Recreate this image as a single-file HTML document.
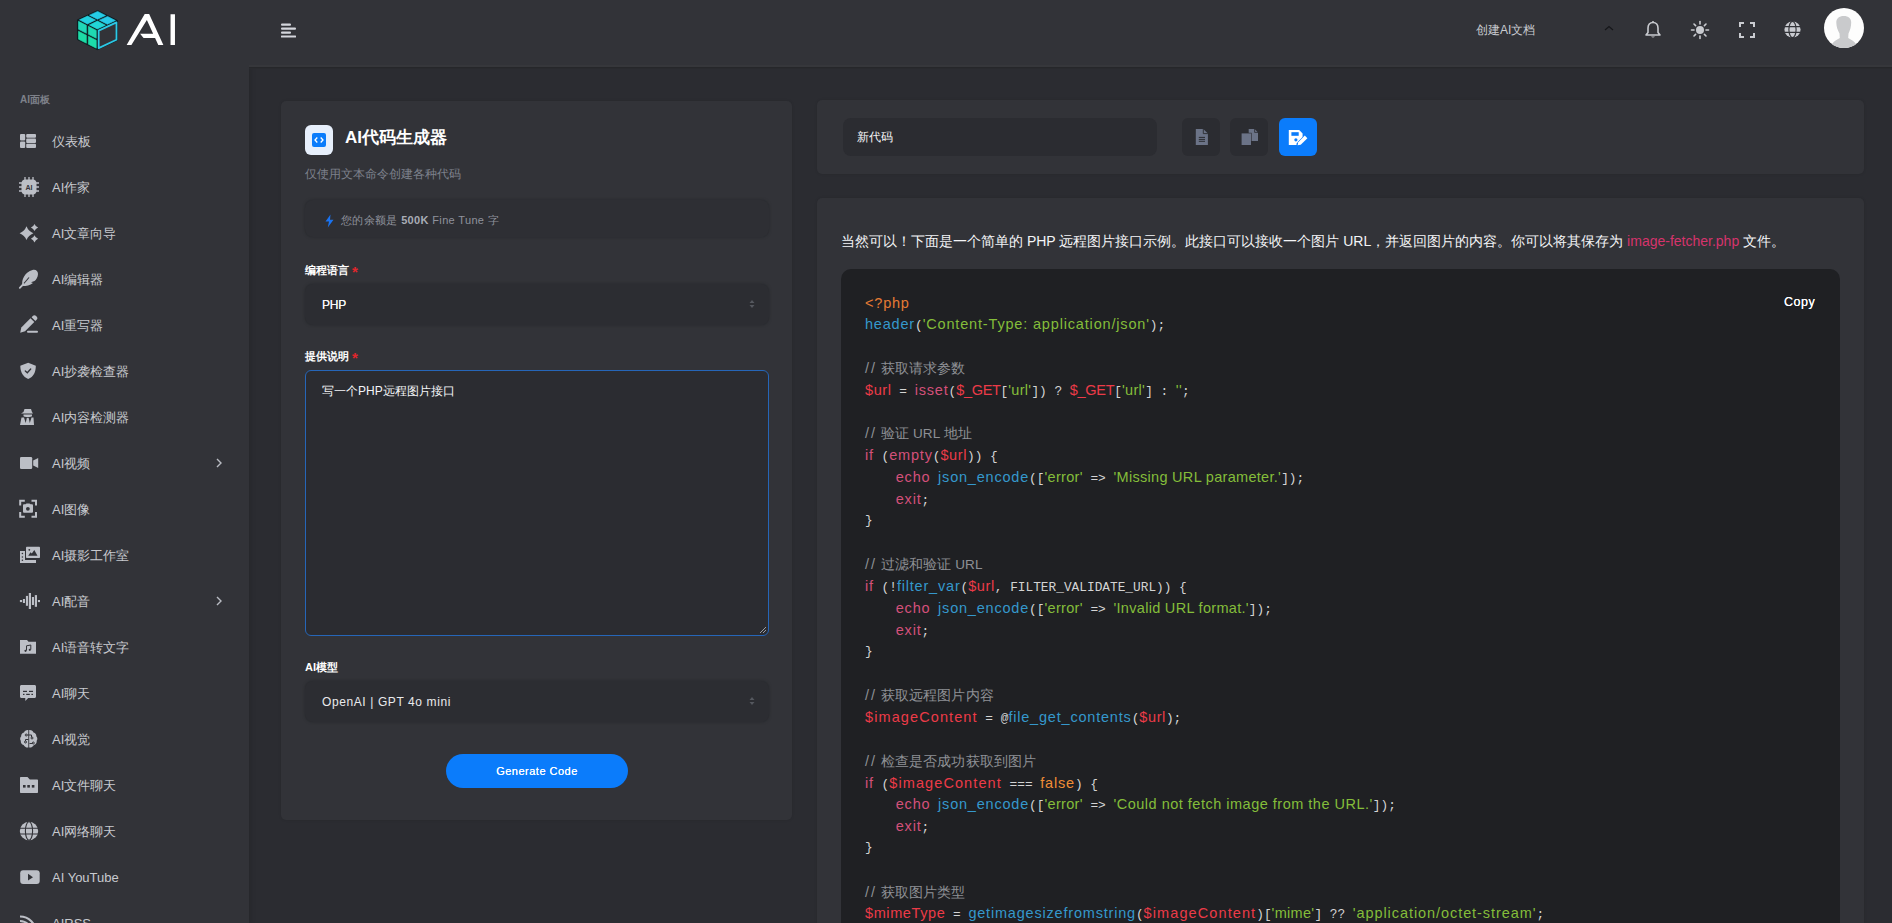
<!DOCTYPE html>
<html><head><meta charset="utf-8">
<style>
*{box-sizing:border-box;margin:0;padding:0}
html,body{width:1892px;height:923px;overflow:hidden;background:#2b2c31;font-family:"Liberation Sans",sans-serif;color:#e6e7ea}
.abs{position:absolute}
#header{position:absolute;left:0;top:0;width:1892px;height:67px;background:#323338;z-index:2}
#sidebar{position:absolute;left:0;top:67px;width:249px;height:856px;background:#323338;box-shadow:2px 0 5px rgba(0,0,0,.12)}
.sbt{position:absolute;left:52px;font-size:13px;line-height:16px;color:#c8cacf;white-space:nowrap}
.card{position:absolute;background:#323338;border-radius:5px;box-shadow:0 0 3px rgba(0,0,0,.12)}
.lbl{position:absolute;left:24px;font-size:11px;font-weight:bold;color:#fff;line-height:14px}
.lbl b{color:#e2262c;font-weight:bold;margin-left:3px;font-size:15px;position:relative;top:3px;line-height:10px}
.inp{position:absolute;left:24px;width:464px;background:#2c2d32;border-radius:8px;box-shadow:0 0 3px rgba(30,31,35,.6)}
.inp .v{position:absolute;left:17px;font-size:12px;color:#e9eaec;line-height:14px;white-space:nowrap}
.arr{position:absolute;right:14px;width:6px;height:10px}
.ibtn{position:absolute;top:18px;width:38px;height:38px;border-radius:6px;background:#2b2c31}
.ln{position:absolute;left:24px;height:22px;font-family:"Liberation Mono",monospace;font-size:12.8px;line-height:22px;color:#d4d4d4;white-space:pre}
.ln span{font-family:"Liberation Sans",sans-serif;font-size:14.5px;letter-spacing:.8px}
.ln span.c{font-size:13.5px;letter-spacing:.1px;color:#8e9095}.ln span.s{letter-spacing:.3px}.ln span.v{letter-spacing:.6px}.ln span.g{letter-spacing:-.3px}.ln span.sl{letter-spacing:2px;font-size:14.5px;color:#8e9095}
.m{color:#e57a34}.f{color:#3598cc}.s{color:#84bd3a}.c{color:#909297}.v{color:#ec3b48}.k{color:#d4507a}.l{color:#f08d36}
</style></head>
<body>
<div id="header">
  <svg class="abs" style="left:70px;top:5px" width="120" height="50" viewBox="0 0 1892 788">
<path d="M118 234 L436 86 L748 244 L748 556 L430 704 L118 546 Z" fill="#0e1d22" stroke="#0e1d22" stroke-width="14" stroke-linejoin="round"/>
<path d="M430 377 L306 314 L433 254 L558 318 Z" fill="#22d5d6" stroke="#22d5d6" stroke-width="10" stroke-linejoin="round"/>
<path d="M589 303 L464 239 L592 180 L716 244 Z" fill="#27cbe9" stroke="#27cbe9" stroke-width="10" stroke-linejoin="round"/>
<path d="M274 298 L150 234 L277 175 L402 238 Z" fill="#23d1e0" stroke="#23d1e0" stroke-width="10" stroke-linejoin="round"/>
<path d="M433 224 L308 160 L436 101 L560 165 Z" fill="#25cde6" stroke="#25cde6" stroke-width="10" stroke-linejoin="round"/>
<path d="M414 400 L290 336 L290 461 L414 524 Z" fill="#1fd9b2" stroke="#1fd9b2" stroke-width="10" stroke-linejoin="round"/>
<path d="M414 556 L290 492 L290 617 L414 680 Z" fill="#1cdcaa" stroke="#1cdcaa" stroke-width="10" stroke-linejoin="round"/>
<path d="M258 321 L134 258 L134 382 L258 446 Z" fill="#20d8b8" stroke="#20d8b8" stroke-width="10" stroke-linejoin="round"/>
<path d="M258 477 L134 414 L134 538 L258 602 Z" fill="#1ddca6" stroke="#1ddca6" stroke-width="10" stroke-linejoin="round"/>
<path d="M452 403 L733 273 L733 548 L452 679 Z" fill="#323338" stroke="#2bc9e6" stroke-width="28" stroke-linejoin="round"/>
    <path d="M893 630 L1178 143 L1248 143 L1472 630 L1392 630 L1212 238 L968 630 Z M1105 455 L1318 455 L1350 522 L1160 522 Z M1585 147 L1655 147 L1655 630 L1585 630 Z" fill="#fff"/>
  </svg>
  <svg class="abs" style="left:280px;top:22px" width="18" height="16" viewBox="0 0 18 16">
    <rect x="1" y="1.5" width="10" height="2.2" rx="1" fill="#d4d6dc"/>
    <rect x="1" y="5.5" width="15" height="2.2" rx="1" fill="#d4d6dc"/>
    <rect x="1" y="9.5" width="10" height="2.2" rx="1" fill="#d4d6dc"/>
    <rect x="1" y="13.5" width="15" height="2" rx=".5" fill="#d4d6dc"/>
  </svg>
  <div class="abs" style="left:1476px;top:22px;font-size:12px;line-height:16px;color:#c9cbd0">创建AI文档</div>
  <svg class="abs" style="left:1603px;top:24px" width="12" height="8" viewBox="0 0 12 8"><path d="M2 6 L6 2.5 L10 6" fill="none" stroke="#16171a" stroke-width="1.2"/></svg>
  <svg class="abs" style="left:1643px;top:20px" width="20" height="20" viewBox="0 0 20 20"><path d="M10 2.5 C6.8 2.5 5 5 5 8 L5 12.5 L3 15 L17 15 L15 12.5 L15 8 C15 5 13.2 2.5 10 2.5 Z" fill="none" stroke="#c9cbd0" stroke-width="1.6" stroke-linejoin="round"/><path d="M8 16.5 Q10 18.5 12 16.5 Z" fill="#c9cbd0"/><circle cx="10" cy="2" r="1" fill="#c9cbd0"/></svg>
  <svg class="abs" style="left:1690px;top:20px" width="20" height="20" viewBox="0 0 20 20"><circle cx="10" cy="10" r="4" fill="#c9cbd0"/><g stroke="#c9cbd0" stroke-width="1.6" stroke-linecap="round"><path d="M10 1.5V4"/><path d="M10 16v2.5"/><path d="M1.5 10H4"/><path d="M16 10h2.5"/><path d="M4 4l1.6 1.6"/><path d="M14.4 14.4L16 16"/><path d="M4 16l1.6-1.6"/><path d="M14.4 5.6L16 4"/></g></svg>
  <svg class="abs" style="left:1737px;top:20px" width="20" height="20" viewBox="0 0 20 20"><path d="M3 7V3h4M13 3h4v4M17 13v4h-4M7 17H3v-4" fill="none" stroke="#c9cbd0" stroke-width="2"/></svg>
  <svg class="abs" style="left:1783px;top:20px" width="19" height="19" viewBox="0 0 20 20"><circle cx="10" cy="10" r="8.5" fill="#c9cbd0"/><g stroke="#323338" stroke-width="1.2" fill="none"><ellipse cx="10" cy="10" rx="3.8" ry="8.5"/><path d="M1.5 7H18.5M1.5 13H18.5"/></g></svg>
  <div class="abs" style="left:1824px;top:8px;width:40px;height:40px;border-radius:50%;background:#fdfdfd;overflow:hidden">
    <svg width="40" height="40" viewBox="0 0 40 40"><path d="M12.3 14.5 C12.3 10.5 15 8 19.8 8 C24.5 8 27.2 10.5 27.2 14.5 C27.2 18.5 26 22.5 24.5 25.5 L24.2 30 C27 31.5 30 33 32 36 L32 42 L8 42 L8 36 C10 33 13 31.5 15.8 30 L15.5 25.5 C13.8 22.5 12.3 18.5 12.3 14.5 Z" fill="#c9cacc"/></svg>
  </div>
</div>

<div id="sidebar"></div>
<div class="abs" style="left:249px;top:65px;width:1643px;height:2px;background:#36373b;z-index:3"></div>
<div class="abs" style="left:249px;top:67px;width:1643px;height:1px;background:#26272a;z-index:3"></div>
<div class="abs" style="left:249px;top:68px;width:1643px;height:1px;background:#292a2e;z-index:3"></div>
<div class="abs" style="left:20px;top:94px;font-size:10px;line-height:12px;color:#7e818a;font-weight:bold">AI面板</div>
<svg class="abs" style="left:14px;top:126px" width="30" height="30" viewBox="0 0 30 30"><rect x="6" y="8" width="5.2" height="6.6" rx="1" fill="#bcbfc6"/><rect x="6" y="15.4" width="5.2" height="6.6" rx="1" fill="#bcbfc6"/>
<rect x="12.2" y="8" width="9.8" height="3.8" rx="1" fill="#bcbfc6"/><rect x="12.2" y="12.6" width="9.8" height="4.4" rx="1" fill="#bcbfc6"/><rect x="12.2" y="17.8" width="9.8" height="4.2" rx="1" fill="#bcbfc6"/></svg><div class="sbt" style="top:133.5px">仪表板</div>
<svg class="abs" style="left:14px;top:172px" width="30" height="30" viewBox="0 0 30 30"><rect x="7.5" y="7.5" width="15" height="15" rx="4" fill="#bcbfc6"/>
<g stroke="#bcbfc6" stroke-width="1.3"><path d="M11 5v3M15 5v3M19 5v3M11 22v3M15 22v3M19 22v3M5 11h3M5 15h3M5 19h3M22 11h3M22 15h3M22 19h3"/></g>
<text x="15" y="17.6" font-size="7" font-weight="bold" text-anchor="middle" fill="#323338" font-family="Liberation Sans">AI</text></svg><div class="sbt" style="top:179.5px">AI作家</div>
<svg class="abs" style="left:14px;top:218px" width="30" height="30" viewBox="0 0 30 30"><path d="M12.5 8.299999999999999 Q14.432 13.267999999999999 19.4 15.2 Q14.432 17.131999999999998 12.5 22.1 Q10.568 17.131999999999998 5.6 15.2 Q10.568 13.267999999999999 12.5 8.299999999999999 Z M20.5 5.9 Q21.508 8.491999999999999 24.1 9.5 Q21.508 10.508000000000001 20.5 13.1 Q19.492 10.508000000000001 16.9 9.5 Q19.492 8.491999999999999 20.5 5.9 Z M20.5 17.2 Q21.508 19.792 24.1 20.8 Q21.508 21.808 20.5 24.400000000000002 Q19.492 21.808 16.9 20.8 Q19.492 19.792 20.5 17.2 Z" fill="#bcbfc6"/></svg><div class="sbt" style="top:225.5px">AI文章向导</div>
<svg class="abs" style="left:14px;top:264px" width="30" height="30" viewBox="0 0 30 30"><path d="M8.5 21.5 C7 16 11 8 18.5 6 C22 5.3 24 7 24 10 C24 13 22 16 20.5 17 L17 18.2 L19 19 C16 21.5 12 22 9.2 22 Z" fill="#bcbfc6"/>
<path d="M6 24 L15 13.5" stroke="#323338" stroke-width="1.1"/><path d="M5.8 23.8 L9.5 20" stroke="#bcbfc6" stroke-width="1.8" stroke-linecap="round"/></svg><div class="sbt" style="top:271.5px">AI编辑器</div>
<svg class="abs" style="left:14px;top:310px" width="30" height="30" viewBox="0 0 30 30"><path d="M6.2 22.8 L7.3 17.5 L16.5 8.3 L20.3 12.1 L11.1 21.3 Z" fill="#bcbfc6"/><path d="M17.6 7.2 L19 5.8 C19.8 5 21 5 21.8 5.8 L22.8 6.8 C23.6 7.6 23.6 8.8 22.8 9.6 L21.4 11 Z" fill="#bcbfc6"/>
<rect x="13" y="20.8" width="11" height="2" rx="1" fill="#bcbfc6"/></svg><div class="sbt" style="top:317.5px">AI重写器</div>
<svg class="abs" style="left:14px;top:356px" width="30" height="30" viewBox="0 0 30 30"><path d="M14.2 6.8 L21.8 9.8 C21.8 16 19.5 21 14.2 23 C9 21 6.3 16 6.3 9.8 Z" fill="#bcbfc6"/>
<path d="M11.3 15 L13.3 16.8 L16.7 13" fill="none" stroke="#323338" stroke-width="1.3" stroke-linecap="round"/></svg><div class="sbt" style="top:363.5px">AI抄袭检查器</div>
<svg class="abs" style="left:14px;top:402px" width="30" height="30" viewBox="0 0 30 30"><path d="M9.5 10 L10.5 7 L17 7 L18 10 L19 11.5 L7 11.5 Z" fill="#bcbfc6"/>
<path d="M9.5 12.5 H18 V13.8 C18 14.8 16 15.2 13.8 15.2 C11.5 15.2 9.5 14.8 9.5 13.8 Z" fill="#bcbfc6"/>
<path d="M7.5 15.5 L10 15.5 L11.7 21 L12.8 16 L14.7 16 L15.8 21 L17.5 15.5 L19.5 15.5 L20 23 L6 23 Z" fill="#bcbfc6"/></svg><div class="sbt" style="top:409.5px">AI内容检测器</div>
<svg class="abs" style="left:14px;top:448px" width="30" height="30" viewBox="0 0 30 30"><rect x="6" y="9" width="12.2" height="12" rx="1.3" fill="#bcbfc6"/><path d="M19.2 12.5 L24.2 10 L24.2 20 L19.2 17.5 Z" fill="#bcbfc6"/></svg><div class="sbt" style="top:455.5px">AI视频</div><svg class="abs" style="left:214px;top:457px" width="10" height="12" viewBox="0 0 10 12"><path d="M3 2 L7 6 L3 10" fill="none" stroke="#b9bcc3" stroke-width="1.4"/></svg>
<svg class="abs" style="left:14px;top:494px" width="30" height="30" viewBox="0 0 30 30"><path d="M6.2 11.5 V6.8 H10.8 M17.5 6.8 H22 V11.5 M22 18 V22.8 H17.5 M10.8 22.8 H6.2 V18" fill="none" stroke="#bcbfc6" stroke-width="2"/>
<path d="M9 11.5 C9 10.7 9.5 10.2 10.3 10.2 L11.5 10.2 L12.5 9.6 H15.5 L16.5 10.2 H17.7 C18.5 10.2 19 10.7 19 11.5 V17.5 C19 18.3 18.5 18.8 17.7 18.8 H10.3 C9.5 18.8 9 18.3 9 17.5 Z" fill="#bcbfc6"/><circle cx="13.9" cy="14.8" r="1.9" fill="#323338"/></svg><div class="sbt" style="top:501.5px">AI图像</div>
<svg class="abs" style="left:14px;top:540px" width="30" height="30" viewBox="0 0 30 30"><path d="M6 11 H11 V20 H22 V23 H6 Z" fill="#bcbfc6"/><circle cx="8.4" cy="13.5" r=".8" fill="#323338"/><circle cx="8.4" cy="17" r=".8" fill="#323338"/><circle cx="8.4" cy="20.3" r=".8" fill="#323338"/>
<rect x="12" y="6.8" width="14" height="11.2" rx=".8" fill="#bcbfc6"/><path d="M14.2 15.8 L16.5 12.3 L17.8 13.5 L20.3 10 L23.5 15.8 Z" fill="#323338"/><circle cx="15.3" cy="9.8" r=".9" fill="#323338"/></svg><div class="sbt" style="top:547.5px">AI摄影工作室</div>
<svg class="abs" style="left:14px;top:586px" width="30" height="30" viewBox="0 0 30 30"><g fill="#bcbfc6"><rect x="5.9" y="14" width="2.2" height="2.1"/><rect x="8.9" y="13" width="2.1" height="4"/><rect x="11.9" y="9.9" width="2.1" height="9.9"/><rect x="14.8" y="7" width="2.2" height="16"/><rect x="17.9" y="11" width="2.1" height="8"/><rect x="20.8" y="9.1" width="2.2" height="11.7"/><rect x="23.9" y="14" width="2.1" height="2.1"/></g></svg><div class="sbt" style="top:593.5px">AI配音</div><svg class="abs" style="left:214px;top:595px" width="10" height="12" viewBox="0 0 10 12"><path d="M3 2 L7 6 L3 10" fill="none" stroke="#b9bcc3" stroke-width="1.4"/></svg>
<svg class="abs" style="left:14px;top:632px" width="30" height="30" viewBox="0 0 30 30"><path d="M6 8 H13 L14.5 9.8 H22 V21.8 H6 Z" fill="#bcbfc6"/>
<path d="M12.5 18.5 V13.8 L16.8 13 V17.5" fill="none" stroke="#323338" stroke-width="1"/><circle cx="11.5" cy="18.8" r="1.1" fill="#323338"/><circle cx="15.8" cy="17.8" r="1.1" fill="#323338"/></svg><div class="sbt" style="top:639.5px">AI语音转文字</div>
<svg class="abs" style="left:14px;top:678px" width="30" height="30" viewBox="0 0 30 30"><path d="M7.5 7 H20.5 C21.4 7 22 7.6 22 8.5 V18.5 C22 19.4 21.4 20 20.5 20 H14.2 L11.3 23 V20 H7.5 C6.6 20 6 19.4 6 18.5 V8.5 C6 7.6 6.6 7 7.5 7 Z" fill="#bcbfc6"/>
<g fill="#323338"><rect x="9" y="12.8" width="4" height="1.2"/><rect x="15" y="12.8" width="4" height="1.2"/><rect x="9" y="15.8" width="1.5" height="1.2"/><rect x="12.2" y="15.8" width="3.6" height="1.2"/><rect x="17.4" y="15.8" width="1.6" height="1.2"/></g></svg><div class="sbt" style="top:685.5px">AI聊天</div>
<svg class="abs" style="left:14px;top:724px" width="30" height="30" viewBox="0 0 30 30"><path d="M14.3 6 C12 5.8 10.5 7 10 8.5 C8 9 7 10.5 7.2 12.3 C6 13.3 5.8 15.5 6.8 16.8 C6.5 18.8 7.8 20.6 9.6 21 C10.5 22.8 12.3 23.8 14.3 23.5 Z M15.2 6 C17.5 5.8 19 7 19.5 8.5 C21.5 9 22.5 10.5 22.3 12.3 C23.5 13.3 23.7 15.5 22.7 16.8 C23 18.8 21.7 20.6 19.9 21 C19 22.8 17.2 23.8 15.2 23.5 Z" fill="#bcbfc6"/>
<g fill="none" stroke="#323338" stroke-width="1"><circle cx="12.2" cy="11" r="1"/><path d="M13.2 11 H17.5 V13"/><circle cx="18" cy="14" r="1"/><circle cx="11.5" cy="18" r="1"/><path d="M11.5 17 V15.5 H14.5"/><path d="M15.5 19.5 H18.5"/><circle cx="19.3" cy="19" r="1"/></g></svg><div class="sbt" style="top:731.5px">AI视觉</div>
<svg class="abs" style="left:14px;top:770px" width="30" height="30" viewBox="0 0 30 30"><path d="M7 7 H13.5 L15.8 9.5 H23 C23.6 9.5 24 9.9 24 10.5 V22 C24 22.6 23.6 23 23 23 H7 C6.4 23 6 22.6 6 22 V8 C6 7.4 6.4 7 7 7 Z" fill="#bcbfc6"/>
<g fill="#323338"><rect x="9" y="15" width="2.6" height="2.6"/><rect x="13.3" y="15" width="2.6" height="2.6"/><rect x="17.8" y="15" width="2.6" height="2.6"/></g></svg><div class="sbt" style="top:777.5px">AI文件聊天</div>
<svg class="abs" style="left:14px;top:816px" width="30" height="30" viewBox="0 0 30 30"><circle cx="15" cy="15" r="9.2" fill="#bcbfc6"/><g fill="none" stroke="#323338" stroke-width="1.1"><ellipse cx="15" cy="15" rx="3.6" ry="9.2"/><path d="M5.5 12.3 H24.5 M5.5 18 H24.5"/></g></svg><div class="sbt" style="top:823.5px">AI网络聊天</div>
<svg class="abs" style="left:14px;top:862px" width="30" height="30" viewBox="0 0 30 30"><rect x="6.2" y="8.2" width="19.5" height="13.8" rx="3" fill="#bcbfc6"/><path d="M14 11.8 L19 15.2 L14 18.5 Z" fill="#323338"/></svg><div class="sbt" style="top:869.5px">AI YouTube</div>
<svg class="abs" style="left:14px;top:908px" width="30" height="30" viewBox="0 0 30 30"><path d="M6 8.5 A16 16 0 0 1 22 24.5" fill="none" stroke="#bcbfc6" stroke-width="2.2"/><path d="M6 13 A11.5 11.5 0 0 1 17.5 24.5" fill="none" stroke="#bcbfc6" stroke-width="2.2"/></svg><div class="sbt" style="top:915.5px">AIRSS</div>

<!-- left card -->
<div class="card" style="left:281px;top:101px;width:511px;height:719px">
  <div class="abs" style="left:24px;top:24px;width:28px;height:30px;border-radius:6px;background:#e7effb">
    <div class="abs" style="left:7px;top:8px;width:14px;height:14px;border-radius:2px;background:#0b7cfb"></div>
    <svg class="abs" style="left:7px;top:8px" width="14" height="14" viewBox="0 0 14 14"><path d="M5.3 4.5 L3 7 L5.3 9.5 M8.7 4.5 L11 7 L8.7 9.5" fill="none" stroke="#fff" stroke-width="1.3"/></svg>
  </div>
  <div class="abs" style="left:64px;top:27px;font-size:17px;line-height:20px;font-weight:bold;color:#fff">AI代码生成器</div>
  <div class="abs" style="left:24px;top:66px;font-size:12px;line-height:15px;color:#7d818c">仅使用文本命令创建各种代码</div>
  <div class="inp" style="top:99px;height:37px;background:#2e2f34">
    <svg class="abs" style="left:19px;top:14px" width="11" height="14" viewBox="0 0 11 14"><path d="M6.5 0.5 L1.5 7.5 L5 7.5 L3.8 13.5 L9.5 5.8 L6 5.8 Z" fill="#1a73f0"/></svg>
    <div class="v" style="left:36px;top:13px;font-size:11px;letter-spacing:.35px;color:#8e929c">您的余额是 <b style="color:#a8acb5">500K</b> Fine Tune 字</div>
  </div>
  <div class="lbl" style="top:162px">编程语言<b>*</b></div>
  <div class="inp" style="top:183px;height:41px">
    <div class="v" style="top:14px;letter-spacing:-.2px;color:#f4f5f7;text-shadow:0 0 .3px #fff">PHP</div>
    <svg class="arr" style="top:15px" viewBox="0 0 6 10"><path d="M0.5 4 L3 1 L5.5 4 Z M0.5 6 L3 9 L5.5 6 Z" fill="#55585f"/></svg>
  </div>
  <div class="lbl" style="top:248px">提供说明<b>*</b></div>
  <div class="abs" style="left:24px;top:269px;width:464px;height:266px;border:1.6px solid #2666b8;border-radius:6px;background:#2b2c31">
    <div class="abs" style="left:16px;top:13px;font-size:12px;line-height:15px;color:#f4f5f7;font-weight:500">写一个PHP远程图片接口</div>
    <svg class="abs" style="right:1px;bottom:1px" width="8" height="8" viewBox="0 0 8 8"><path d="M7 1 L1 7 M7 4 L4 7" stroke="#9a9ca2" stroke-width="1"/></svg>
  </div>
  <div class="lbl" style="top:559px">AI模型</div>
  <div class="inp" style="top:580px;height:41px">
    <div class="v" style="top:14px;letter-spacing:.6px">OpenAI | GPT 4o mini</div>
    <svg class="arr" style="top:15px" viewBox="0 0 6 10"><path d="M0.5 4 L3 1 L5.5 4 Z M0.5 6 L3 9 L5.5 6 Z" fill="#55585f"/></svg>
  </div>
  <div class="abs" style="left:165px;top:653px;width:182px;height:34px;border-radius:17px;background:#0b7cfb;color:#fff;font-size:11px;line-height:34px;text-align:center;font-weight:normal;letter-spacing:.5px;text-shadow:0 0 .4px #fff">Generate Code</div>
</div>

<!-- right top card -->
<div class="card" style="left:817px;top:100px;width:1047px;height:74px">
  <div class="abs" style="left:26px;top:18px;width:314px;height:38px;border-radius:8px;background:#2b2c31">
    <div class="abs" style="left:14px;top:12px;font-size:12px;line-height:15px;color:#f4f5f7;font-weight:500">新代码</div>
  </div>
  <div class="ibtn" style="left:365px">
    <svg class="abs" style="left:0;top:0" width="38" height="38" viewBox="0 0 38 38"><path d="M13.8 11 H21.3 L25.9 15.6 V27 H13.8 Z" fill="#6b7387"/><path d="M21.3 11 V15.6 H25.9" fill="none" stroke="#2b2c31" stroke-width=".9"/><path d="M16.8 19.4h6.2M16.8 21.4h6.2M16.8 23.3h6.2" stroke="#2b2c31" stroke-width="1"/></svg>
  </div>
  <div class="ibtn" style="left:413px">
    <svg class="abs" style="left:0;top:0" width="38" height="38" viewBox="0 0 38 38"><path d="M18.7 11 H24.6 L28 14.4 V23 H18.7 Z" fill="#6b7387"/><path d="M24.6 11 V14.4 H28" fill="none" stroke="#2b2c31" stroke-width=".8"/><rect x="11" y="14.8" width="10.6" height="12.8" fill="#2b2c31"/><rect x="11.6" y="15.4" width="9.4" height="11.6" fill="#6b7387"/></svg>
  </div>
  <div class="ibtn" style="left:462px;background:#0b7cfb">
    <svg class="abs" style="left:0;top:0" width="38" height="38" viewBox="0 0 38 38"><path d="M9.8 12 H20.2 L23.6 15.4 V19.5 L17.5 25.6 V27 H9.8 Z" fill="#fff"/><rect x="12.4" y="14.2" width="7.3" height="3.6" fill="#0b7cfb"/><circle cx="16.9" cy="21.8" r="1.6" fill="#0b7cfb"/><path d="M18.6 27.2 L19.2 24.3 L25.8 17.6 L28.4 20.2 L21.7 26.7 Z" fill="#fff" stroke="#0b7cfb" stroke-width="1.1" paint-order="stroke"/></svg>
  </div>
</div>

<!-- right main card -->
<div class="card" style="left:817px;top:198px;width:1047px;height:760px">
  <div class="abs" style="left:24px;top:35px;font-size:14px;line-height:16px;color:#f4f5f7;font-weight:500;white-space:nowrap">当然可以！下面是一个简单的 PHP 远程图片接口示例。此接口可以接收一个图片 URL，并返回图片的内容。你可以将其保存为 <span style="color:#d6336c">image-fetcher.php</span> 文件。</div>
  <div class="abs" style="left:24px;top:71px;width:999px;height:700px;background:#1f2023;border-radius:10px">
    <div class="abs" style="left:943px;top:26px;font-size:12.5px;line-height:14px;color:#fff;letter-spacing:.5px;text-shadow:0 0 .4px #fff">Copy</div>
<div class="code">
<div class="ln" style="top:22.50px"><span class="m">&lt;?php</span></div>
<div class="ln" style="top:44.32px"><span class="f">header</span>(<span class="s" style="letter-spacing:.83px">'Content-Type: application/json'</span>);</div>
<div class="ln" style="top:66.14px"></div>
<div class="ln" style="top:87.96px"><span class="c"><span class="sl">//</span> 获取请求参数</span></div>
<div class="ln" style="top:109.78px"><span class="v">$url</span> = <span class="k">isset</span>(<span class="v g">$_GET</span>[<span class="s">'url'</span>]) ? <span class="v g">$_GET</span>[<span class="s">'url'</span>] : <span class="s">''</span>;</div>
<div class="ln" style="top:131.60px"></div>
<div class="ln" style="top:153.42px"><span class="c"><span class="sl">//</span> 验证 URL 地址</span></div>
<div class="ln" style="top:175.24px"><span class="k">if</span> (<span class="k">empty</span>(<span class="v">$url</span>)) {</div>
<div class="ln" style="top:197.06px">    <span class="k">echo</span> <span class="f">json_encode</span>([<span class="s">'error'</span> =&gt; <span class="s">'Missing URL parameter.'</span>]);</div>
<div class="ln" style="top:218.88px">    <span class="k">exit</span>;</div>
<div class="ln" style="top:240.70px">}</div>
<div class="ln" style="top:262.52px"></div>
<div class="ln" style="top:284.34px"><span class="c"><span class="sl">//</span> 过滤和验证 URL</span></div>
<div class="ln" style="top:306.16px"><span class="k">if</span> (!<span class="f">filter_var</span>(<span class="v">$url</span>, FILTER_VALIDATE_URL)) {</div>
<div class="ln" style="top:327.98px">    <span class="k">echo</span> <span class="f">json_encode</span>([<span class="s">'error'</span> =&gt; <span class="s">'Invalid URL format.'</span>]);</div>
<div class="ln" style="top:349.80px">    <span class="k">exit</span>;</div>
<div class="ln" style="top:371.62px">}</div>
<div class="ln" style="top:393.44px"></div>
<div class="ln" style="top:415.26px"><span class="c"><span class="sl">//</span> 获取远程图片内容</span></div>
<div class="ln" style="top:437.08px"><span class="v" style="letter-spacing:1.1px">$imageContent</span> = @<span class="f">file_get_contents</span>(<span class="v">$url</span>);</div>
<div class="ln" style="top:458.90px"></div>
<div class="ln" style="top:480.72px"><span class="c"><span class="sl">//</span> 检查是否成功获取到图片</span></div>
<div class="ln" style="top:502.54px"><span class="k">if</span> (<span class="v" style="letter-spacing:1.1px">$imageContent</span> === <span class="l">false</span>) {</div>
<div class="ln" style="top:524.36px">    <span class="k">echo</span> <span class="f">json_encode</span>([<span class="s">'error'</span> =&gt; <span class="s" style="letter-spacing:.5px">'Could not fetch image from the URL.'</span>]);</div>
<div class="ln" style="top:546.18px">    <span class="k">exit</span>;</div>
<div class="ln" style="top:568.00px">}</div>
<div class="ln" style="top:589.82px"></div>
<div class="ln" style="top:611.64px"><span class="c"><span class="sl">//</span> 获取图片类型</span></div>
<div class="ln" style="top:633.46px"><span class="v">$mimeType</span> = <span class="f">getimagesizefromstring</span>(<span class="v" style="letter-spacing:1.1px">$imageContent</span>)[<span class="s">'mime'</span>] ?? <span class="s" style="letter-spacing:.93px">'application/octet-stream'</span>;</div>
</div>
  </div>
</div>
</body></html>
